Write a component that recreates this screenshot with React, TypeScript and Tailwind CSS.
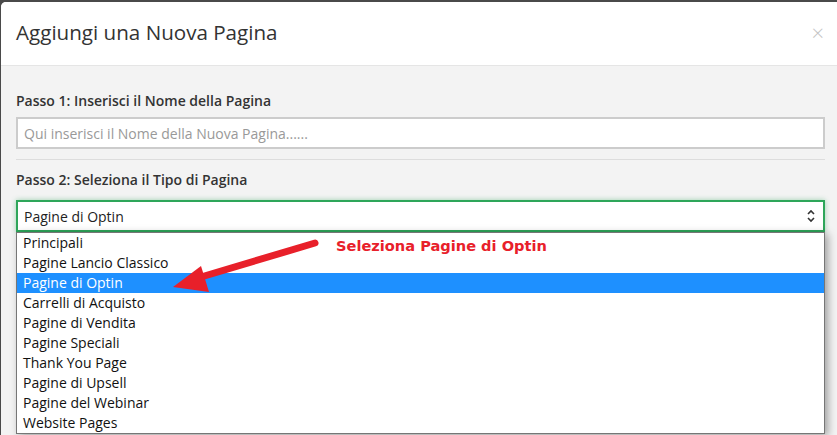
import React from "react";

const items = [
  "Principali",
  "Pagine Lancio Classico",
  "Pagine di Optin",
  "Carrelli di Acquisto",
  "Pagine di Vendita",
  "Pagine Speciali",
  "Thank You Page",
  "Pagine di Upsell",
  "Pagine del Webinar",
  "Website Pages",
];

export default function App() {
  return (
    <div
      className="w-[837px] h-[435px] overflow-hidden bg-[#4a4a4a] pt-[2px] pl-[1px]"
      style={{ fontFamily: '"Open Sans", "Noto Sans", sans-serif' }}
    >
      <div className="relative h-[433px] rounded-tl-[5px] overflow-hidden bg-[#f3f3f3]">
        {/* header */}
        <div className="h-[64px] bg-white border-b border-[#e5e5e5] flex items-center justify-between pl-[15px] pr-[13px]">
          <h1 className="text-[20.6px] text-[#333] leading-none pb-[3px]">Aggiungi una Nuova Pagina</h1>
          <span className="text-[22px] text-[#c4c4c4] leading-none font-light pb-[3px]">×</span>
        </div>
        {/* body */}
        <div className="pl-[15px] pr-[12px] pt-[25px]">
          <label className="block text-[14px] font-semibold text-[#333] leading-[20px]">Passo 1: Inserisci il Nome della Pagina</label>
          <div className="mt-[6px] h-[32px] bg-white border-2 border-[#cccccc] flex items-center pl-[6px] text-[14px] text-[#999]">
            Qui inserisci il Nome della Nuova Pagina......
          </div>
          <div className="mt-[10px] border-t border-[#dddddd]" />
          <label className="block mt-[10px] text-[14px] font-semibold text-[#333] leading-[20px]">Passo 2: Seleziona il Tipo di Pagina</label>
          <div className="mt-[10px] h-[32px] bg-white border-2 border-[#2ea65a] shadow-[0_0_5px_rgba(46,166,90,0.45)] flex items-center justify-between pl-[6px] pr-[7px] text-[14px] text-[#222]">
            <span>Pagine di Optin</span>
            <svg width="10" height="16" viewBox="0 0 10 16" fill="none" stroke="#333" strokeWidth="1.6">
              <path d="M2 6 L5 3 L8 6" />
              <path d="M2 10 L5 13 L8 10" />
            </svg>
          </div>
          <div className="bg-white border border-[#767676] shadow-[3px_2px_8px_rgba(0,0,0,0.35)]">
            {items.map((it) => (
              <div
                key={it}
                className={
                  it === "Pagine di Optin"
                    ? "h-[20px] leading-[20px] pl-[6px] text-[14px] bg-[#1e90ff] text-white"
                    : "h-[20px] leading-[20px] pl-[6px] text-[14px] text-[#111]"
                }
              >
                {it}
              </div>
            ))}
          </div>
        </div>

        {/* annotation */}
        <div
          className="absolute left-[335px] top-[233px] text-[14.6px] font-bold text-[#e8202a]"
          style={{ fontFamily: '"DejaVu Sans", sans-serif' }}
        >
          Seleziona Pagine di Optin
        </div>
        <svg className="absolute left-0 top-0" width="837" height="433" viewBox="0 2 837 433">
          <line x1="314" y1="243" x2="200" y2="277" stroke="#e8202a" strokeWidth="7" strokeLinecap="round" />
          <polygon points="172,287 200,266 208,292" fill="#e8202a" />
        </svg>
      </div>
    </div>
  );
}
